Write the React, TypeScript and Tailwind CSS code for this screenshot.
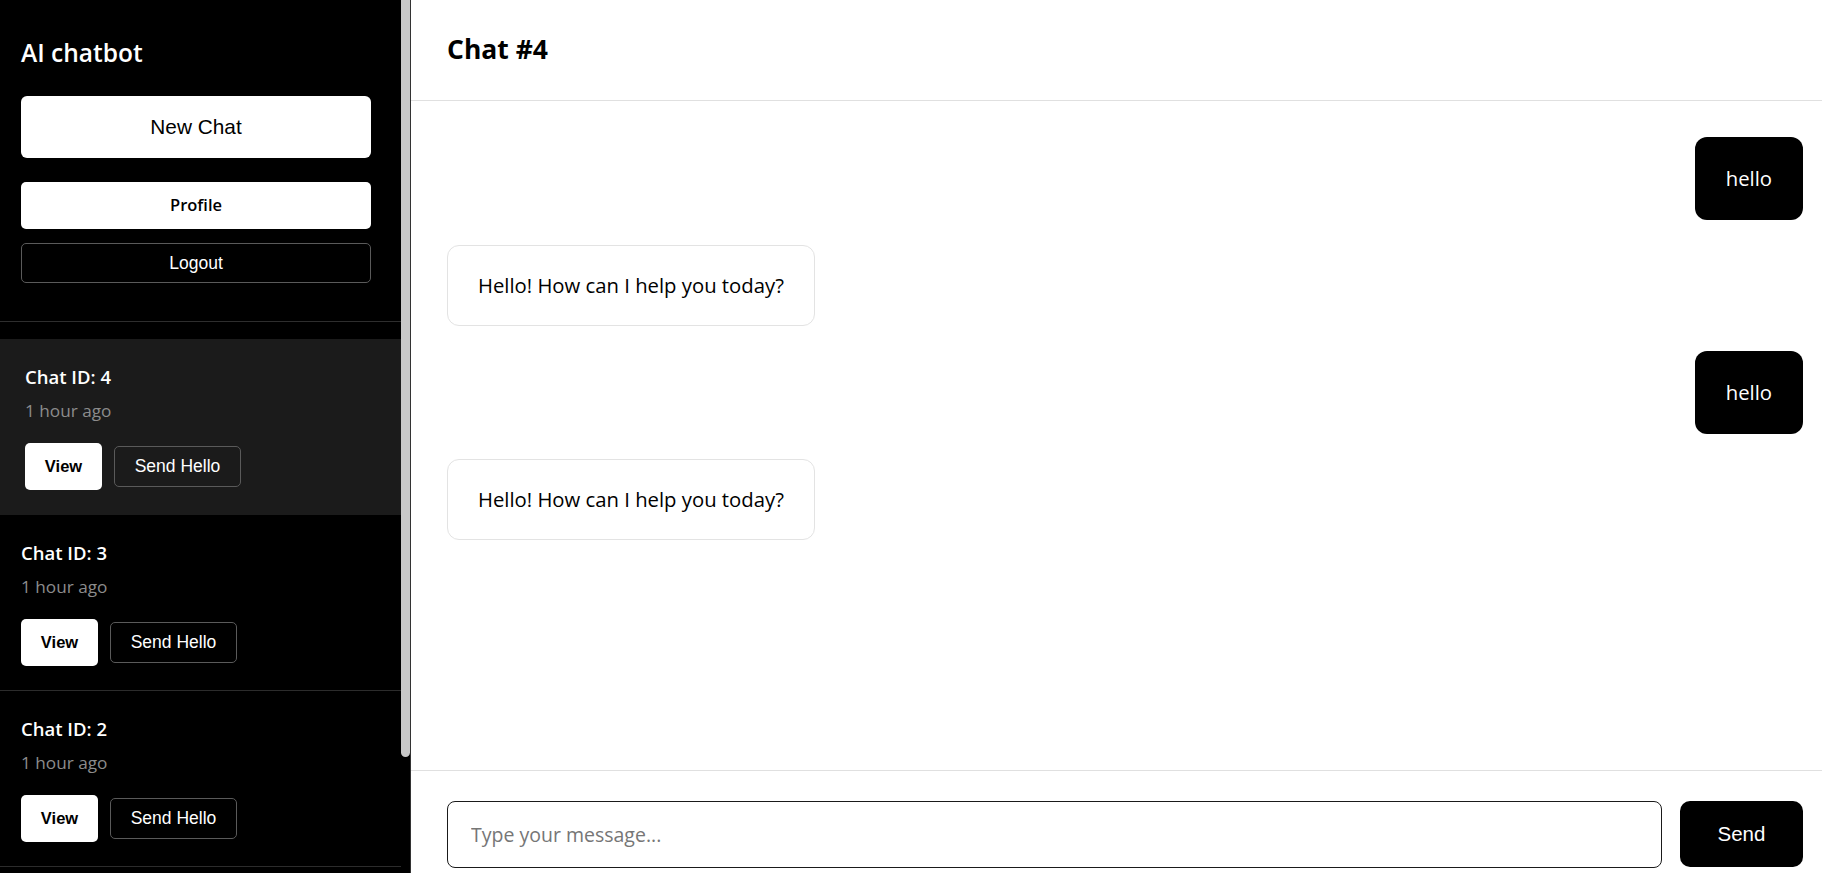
import React from "react";

interface Chat {
  id: number;
  time: string;
}

const chats: Chat[] = [
  { id: 4, time: "1 hour ago" },
  { id: 3, time: "1 hour ago" },
  { id: 2, time: "1 hour ago" },
];

const ui = "font-['Open_Sans','Noto_Sans',sans-serif]";
const arial = "font-['Liberation_Sans',Arial,sans-serif]";

const ChatRow = ({ chat, active }: { chat: Chat; active: boolean }) => {
  return (
    <div
      className={
        active
          ? "bg-[#1b1b1b] pl-[25px] pr-[21px] pt-[25px] pb-[25px]"
          : "border-b border-[#2c2c2c] pl-[21px] pr-[21px] pt-[25px] pb-[24px]"
      }
    >
      <div className={`${ui} text-[18.5px] font-semibold leading-[26px] text-white`}>Chat ID: {chat.id}</div>
      <div className={`${ui} mt-[8px] text-[17.2px] leading-[26px] text-[#8c8c8c]`}>{chat.time}</div>
      <div className="mt-[19px] flex items-center gap-[12px]">
        <button className={`${arial} flex h-[47px] w-[77px] items-center justify-center rounded-[5px] bg-white text-[16.5px] font-bold text-black`}>
          View
        </button>
        <button className={`${arial} flex h-[41px] w-[127px] items-center justify-center rounded-[5px] border border-[#5a5a5a] text-[17.5px] text-white`}>
          Send Hello
        </button>
      </div>
    </div>
  );
};

const Sidebar = () => {
  return (
    <aside className="flex h-[873px] w-[411px] shrink-0 overflow-hidden border-r border-[#333] bg-black">
      <div className="w-[401px] shrink-0">
        <div className="border-b border-[#2e2e2e] pl-[21px] pr-[30px] pt-[33px] pb-[38px]">
          <h2 className={`${ui} text-[24.5px] font-semibold leading-[39px] text-white`}>AI chatbot</h2>
          <button className={`${arial} mt-[24px] flex h-[62px] w-[350px] items-center justify-center rounded-[6px] bg-white text-[20.8px] text-black`}>
            New Chat
          </button>
          <button className={`${ui} mt-[24px] flex h-[47px] w-[350px] items-center justify-center rounded-[5px] bg-white text-[16.5px] font-semibold text-black`}>
            Profile
          </button>
          <button className={`${arial} mt-[14px] flex h-[40px] w-[350px] items-center justify-center rounded-[5px] border border-[#5a5a5a] text-[17.5px] text-white`}>
            Logout
          </button>
        </div>
        <div className="pt-[17px]">
          {chats.map((c) => (
            <ChatRow key={c.id} chat={c} active={c.id === 4} />
          ))}
        </div>
      </div>
      {/* scrollbar track */}
      <div className="w-[9px] shrink-0 bg-black">
        <div className="h-[757px] rounded-b-[5px] bg-[#c8c8c8]" />
      </div>
    </aside>
  );
};

const messages = [
  { from: "user", text: "hello" },
  { from: "bot", text: "Hello! How can I help you today?" },
  { from: "user", text: "hello" },
  { from: "bot", text: "Hello! How can I help you today?" },
];

export default function App() {
  return (
    <div className="flex h-[873px] overflow-hidden bg-white">
      <Sidebar />
      <main className="flex h-[898px] min-w-0 flex-1 flex-col">
        <header className="flex h-[101px] shrink-0 items-center border-b border-[#e0e0e0] pl-[36px]">
          <h1 className={`${ui} text-[26.5px] font-bold text-black`}>Chat #4</h1>
        </header>
        <div className="flex flex-1 flex-col gap-[25px] overflow-hidden pl-[36px] pr-[19px] pt-[36px]">
          {messages.map((m, i) =>
            m.from === "user" ? (
              <div key={i} className="flex justify-end">
                <div className={`${ui} rounded-[12px] bg-black px-[31px] py-[28px] text-[20.3px] leading-[27px] text-white`}>
                  {m.text}
                </div>
              </div>
            ) : (
              <div key={i} className="flex justify-start">
                <div className={`${ui} rounded-[12px] border border-[#e3e3e3] bg-white px-[30px] py-[26px] text-[20.3px] leading-[27px] text-black`}>
                  {m.text}
                </div>
              </div>
            )
          )}
        </div>
        <div className="flex h-[128px] shrink-0 items-start gap-[18px] border-t border-[#e0e0e0] pl-[36px] pr-[19px] pt-[30px]">
          <input
            type="text"
            placeholder="Type your message..."
            className={`${ui} h-[67px] flex-1 rounded-[8px] border-[1.3px] border-[#1a1a1a] px-[23px] text-[19.5px] text-black outline-none placeholder:text-[#767676]`}
          />
          <button className={`${arial} h-[66px] w-[123px] rounded-[10px] bg-black text-[20.5px] text-white`}>Send</button>
        </div>
      </main>
    </div>
  );
}
